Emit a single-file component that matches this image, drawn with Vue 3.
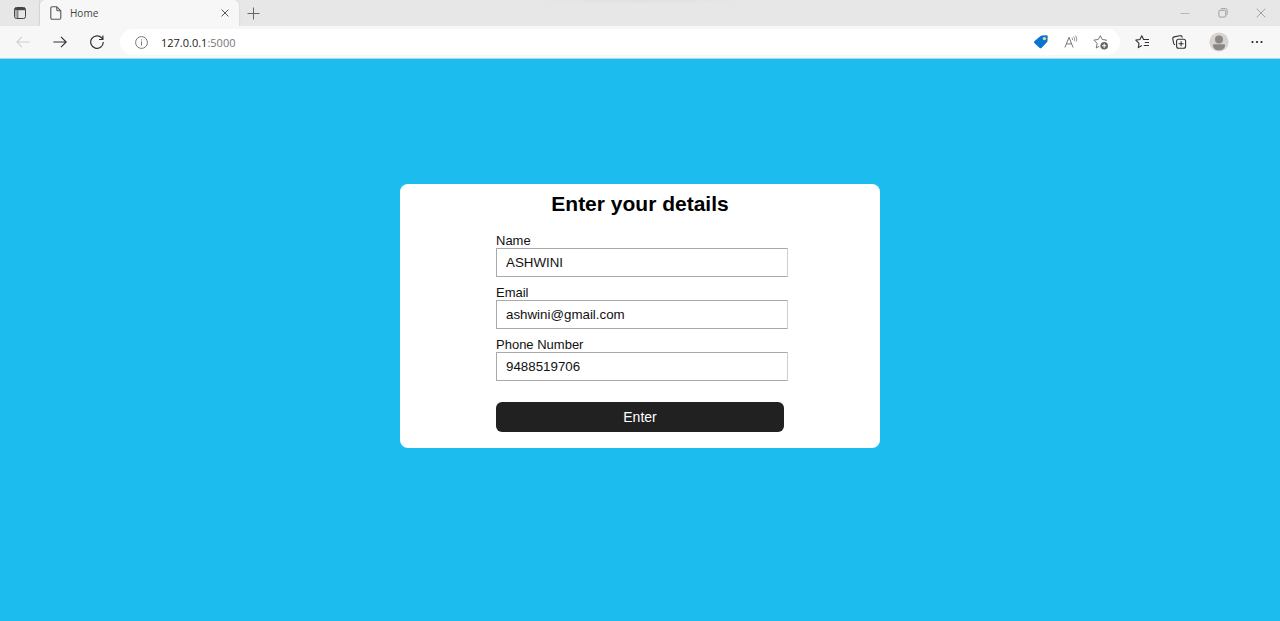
<script setup>
import { ref } from 'vue'

const url = ref({ host: '127.0.0.1', port: ':5000' })
const fields = ref([
  { id: 'name', label: 'Name', type: 'text', value: 'ASHWINI' },
  { id: 'email', label: 'Email', type: 'email', value: 'ashwini@gmail.com' },
  { id: 'phone', label: 'Phone Number', type: 'tel', value: '9488519706' }
])
</script>

<template>
  <div class="browser">
    <header class="tabs">
      <button class="icon workspace" aria-label="Tab actions">
        <svg width="14" height="14" viewBox="0 0 14 14" fill="none" stroke="#444">
          <rect x="1.5" y="1.5" width="11" height="11" rx="2" />
          <path d="M2 3h10" stroke-width="2.4" />
          <path d="M4.8 4v8" stroke-width=".9" />
          <path d="M3.2 4v8" stroke="#aaa" stroke-width="2" />
        </svg>
      </button>
      <div class="tab">
        <svg width="12" height="14" viewBox="0 0 12 14" fill="none" stroke="#555" stroke-width="1.1" stroke-linejoin="round">
          <path d="M2.2.8h4.6l4 4v6.9c0 .9-.5 1.5-1.4 1.5H2.2c-.9 0-1.4-.6-1.4-1.5V2.3C.8 1.4 1.3.8 2.2.8z" />
          <path d="M6.8.9v2.9c0 .7.4 1 1 1h2.9" />
        </svg>
        <span class="tab-title">Home</span>
        <button class="icon close" aria-label="Close tab">
          <svg width="8" height="8" viewBox="0 0 8 8" stroke="#555" stroke-width="1"><path d="M.6.6l6.8 6.8M7.4.6L.6 7.4" /></svg>
        </button>
      </div>
      <button class="icon new-tab" aria-label="New tab">
        <svg width="13" height="13" viewBox="0 0 13 13" stroke="#666"><path d="M6.5.5v12M.5 6.5h12" /></svg>
      </button>
      <div class="window-controls">
        <button class="icon" aria-label="Minimize">
          <svg width="10" height="10" viewBox="0 0 10 10" stroke="#b8b8b8"><path d="M.5 5.5h9" /></svg>
        </button>
        <button class="icon" aria-label="Restore">
          <svg width="10" height="10" viewBox="0 0 10 10" fill="none" stroke="#999" stroke-width=".9">
            <rect x=".9" y="2.3" width="6.8" height="6.8" rx="1" />
            <path d="M2.6 1.2c.2-.4.6-.6 1-.6h4c1 0 1.6.6 1.6 1.6v3.9c0 .5-.2.9-.6 1.1" />
          </svg>
        </button>
        <button class="icon" aria-label="Close">
          <svg width="10" height="10" viewBox="0 0 10 10" stroke="#999" stroke-width=".9"><path d="M.7.7l8.6 8.6M9.3.7L.7 9.3" /></svg>
        </button>
      </div>
    </header>

    <nav class="toolbar">
      <div class="history">
        <button class="icon" aria-label="Back">
          <svg width="14" height="12" viewBox="0 0 14 12" fill="none" stroke="#cfcfcf" stroke-width="1.1"><path d="M13.6 6H.8M6 .8L.8 6 6 11.2" /></svg>
        </button>
        <button class="icon" aria-label="Forward">
          <svg width="14" height="12" viewBox="0 0 14 12" fill="none" stroke="#333" stroke-width="1.2"><path d="M.4 6h12.8M8 .8L13.2 6 8 11.2" /></svg>
        </button>
        <button class="icon" aria-label="Refresh">
          <svg width="14" height="14" viewBox="0 0 14 14" fill="none" stroke="#333" stroke-width="1.2"><path d="M13.3 7A6.3 6.3 0 1 1 11.8 3L12.8 4.2M12.9.5v4H9" /></svg>
        </button>
      </div>
      <div class="address">
        <svg width="13" height="13" viewBox="0 0 13 13" fill="none" stroke="#777">
          <circle cx="6.5" cy="6.5" r="5.9" /><path d="M6.5 5.5v4M6.5 3.4v1.1" />
        </svg>
        <span class="url">{{ url.host }}<span class="port">{{ url.port }}</span></span>
        <div class="address-actions">
          <button class="icon" aria-label="Shopping">
            <svg width="16" height="14" viewBox="0 0 16 14">
              <path d="M9 .6L13.4.3c.8 0 1.3.5 1.3 1.2l-.2 4.4c0 .6-.2 1-.6 1.4l-5.2 5.4c-.7.7-1.6.7-2.3 0L1.6 8.3c-.7-.7-.7-1.5 0-2.2l5.7-4.9C7.8.8 8.3.6 9 .6z" fill="#0b74cf" />
              <circle cx="11.4" cy="3.6" r="1.7" fill="#e9dc82" />
            </svg>
          </button>
          <button class="icon" aria-label="Read aloud">
            <svg width="14" height="14" viewBox="0 0 14 14" fill="none" stroke="#777">
              <path d="M.9 12.5L5 2.3l4.1 10.2M2.3 8.9h5.4" />
              <path d="M8 2.7c.6.6.7 1.5.4 2.3M9.6 1.6c1.1 1.2 1.3 2.9.6 4.3M11.3.6c1.5 1.7 1.8 4 .8 6" stroke-width=".8" />
            </svg>
          </button>
          <button class="icon" aria-label="Add to favorites">
            <svg width="16" height="15" viewBox="0 0 16 15" fill="none" stroke="#777">
              <path d="M6.3 11.2l-3 1.8.8-4.7L.9 5.1l4.3-.6L7.3.7l2 3.8 4.3.6-1 1" stroke-linejoin="round" />
              <circle cx="11.2" cy="10.7" r="3.8" fill="#666" stroke="none" />
              <path d="M11.2 8.6v4.2M9.1 10.7h4.2" stroke="#fff" />
            </svg>
          </button>
        </div>
      </div>
      <div class="tools">
        <button class="icon" aria-label="Favorites">
          <svg width="15" height="14" viewBox="0 0 15 14" fill="none" stroke="#333" stroke-width="1.1" stroke-linejoin="round">
            <path d="M6.8 10.5L3.3 12.6l.7-4.3L.8 5.1l4.1-.6L6.8.8l1.8 3.7H14M9.8 7.5H14M8.8 10.5H14" />
          </svg>
        </button>
        <button class="icon" aria-label="Collections">
          <svg width="15" height="14" viewBox="0 0 15 14" fill="none" stroke="#333" stroke-width="1.1">
            <rect x="4.6" y="4.3" width="9" height="9" rx="2" />
            <path d="M9.1 6.3v5M6.6 8.8h5M3.1 9.8c-.8-.2-1.2-.7-1.4-1.4L.8 4.1C.6 2.9 1 2.2 2.1 1.9L8 .7c1.1-.2 1.8.2 2.1 1.2l.2.8" />
          </svg>
        </button>
        <button class="icon" aria-label="Profile">
          <svg width="20" height="20" viewBox="0 0 20 20">
            <circle cx="10" cy="10" r="9.6" fill="#d5d2cf" />
            <circle cx="10" cy="7.4" r="4" fill="#8b8785" />
            <path d="M4 13.4c0-.7.5-1.1 1.2-1.1h9.6c.7 0 1.2.4 1.2 1.1 0 3-2.6 4.9-6 4.9s-6-1.9-6-4.9z" fill="#8b8785" />
          </svg>
        </button>
        <button class="icon" aria-label="Settings and more">
          <svg width="12" height="4" viewBox="0 0 12 4" fill="#222"><circle cx="1.5" cy="2" r="1.1" /><circle cx="6" cy="2" r="1.1" /><circle cx="10.5" cy="2" r="1.1" /></svg>
        </button>
      </div>
    </nav>

    <main class="page">
      <form class="card" @submit.prevent>
        <h1>Enter your details</h1>
        <div class="fields">
          <div v-for="field in fields" :key="field.id" class="field">
            <label :for="field.id">{{ field.label }}</label>
            <input :id="field.id" v-model="field.value" :type="field.type" />
          </div>
          <button class="submit" type="submit">Enter</button>
        </div>
      </form>
    </main>
  </div>
</template>

<style>
body {
  margin: 0;
}
</style>

<style scoped>
.browser {
  display: flex;
  flex-direction: column;
  min-height: 100vh;
  font-family: "Liberation Sans", Arial, sans-serif;
}
.icon {
  display: flex;
  align-items: center;
  justify-content: center;
  flex: none;
  padding: 0;
  border: 0;
  background: none;
}
svg {
  display: block;
  flex: none;
}
.tabs {
  display: flex;
  height: 26px;
  background: radial-gradient(ellipse 110px 5px at 50% 0, #e1e1e1, #e7e7e7);
  font-family: "Open Sans", "Noto Sans", sans-serif;
}
.workspace {
  width: 40px;
  border-right: 1px solid #dadada;
  border-radius: 0 0 4px 0;
}
.tab {
  display: flex;
  align-items: center;
  box-sizing: border-box;
  width: 199px;
  padding: 0 10px;
  border-radius: 5px 5px 0 0;
  background: #f7f7f7;
  box-shadow: 0 0 2px #c4c4c4;
  clip-path: inset(0 -3px);
}
.tab-title {
  flex: 1;
  margin-left: 8px;
  color: #444;
  font-size: 10px;
}
.new-tab {
  width: 29px;
}
.window-controls {
  display: flex;
  gap: 28px;
  margin-left: auto;
  padding-right: 14px;
}
.toolbar {
  display: flex;
  align-items: center;
  box-sizing: border-box;
  height: 33px;
  border-bottom: 1px solid #a5d9ee;
  background: #f7f7f7;
}
.history {
  display: flex;
  gap: 23px;
  padding: 0 16px;
}
.address {
  display: flex;
  flex: 1;
  align-items: center;
  height: 26px;
  padding: 0 11px 0 15px;
  border-radius: 13px;
  background: #fff;
}
.url {
  margin-left: 13px;
  color: #222;
  font-family: "Open Sans", "Noto Sans", sans-serif;
  font-size: 11px;
}
.port {
  color: #777;
}
.address-actions {
  display: flex;
  gap: 15px;
  margin-left: auto;
}
.tools {
  display: flex;
  align-items: center;
  gap: 22px;
  padding: 0 17px 0 15px;
}
.page {
  display: flex;
  flex: 1;
  align-items: center;
  justify-content: center;
  box-sizing: border-box;
  padding: 20px 20px 68px;
  background: #1dbcef;
}
.card {
  box-sizing: border-box;
  width: 100%;
  max-width: 480px;
  padding: 8px 0 16px;
  border-radius: 8px;
  background: #fff;
}
h1 {
  margin: 0 0 18px;
  color: #000;
  font-size: 21px;
  line-height: 24px;
  text-align: center;
}
.fields {
  width: 60%;
  margin: 0 auto;
}
.field {
  margin-bottom: 9px;
}
label {
  display: block;
  color: #111;
  font-size: 13px;
  line-height: 14px;
}
input {
  display: block;
  box-sizing: border-box;
  width: calc(100% + 4px);
  height: 29px;
  padding: 0 9px;
  border: 1px solid #a9a9a9;
  border-right-color: #cfcfcf;
  border-radius: 1px;
  background: #fff;
  color: #111;
  font-family: inherit;
}
.submit {
  display: block;
  width: 100%;
  height: 30px;
  margin-top: 21px;
  padding: 0;
  border: 0;
  border-radius: 6px;
  background: #212121;
  color: #fff;
  font-family: inherit;
  font-size: 14px;
}
</style>
